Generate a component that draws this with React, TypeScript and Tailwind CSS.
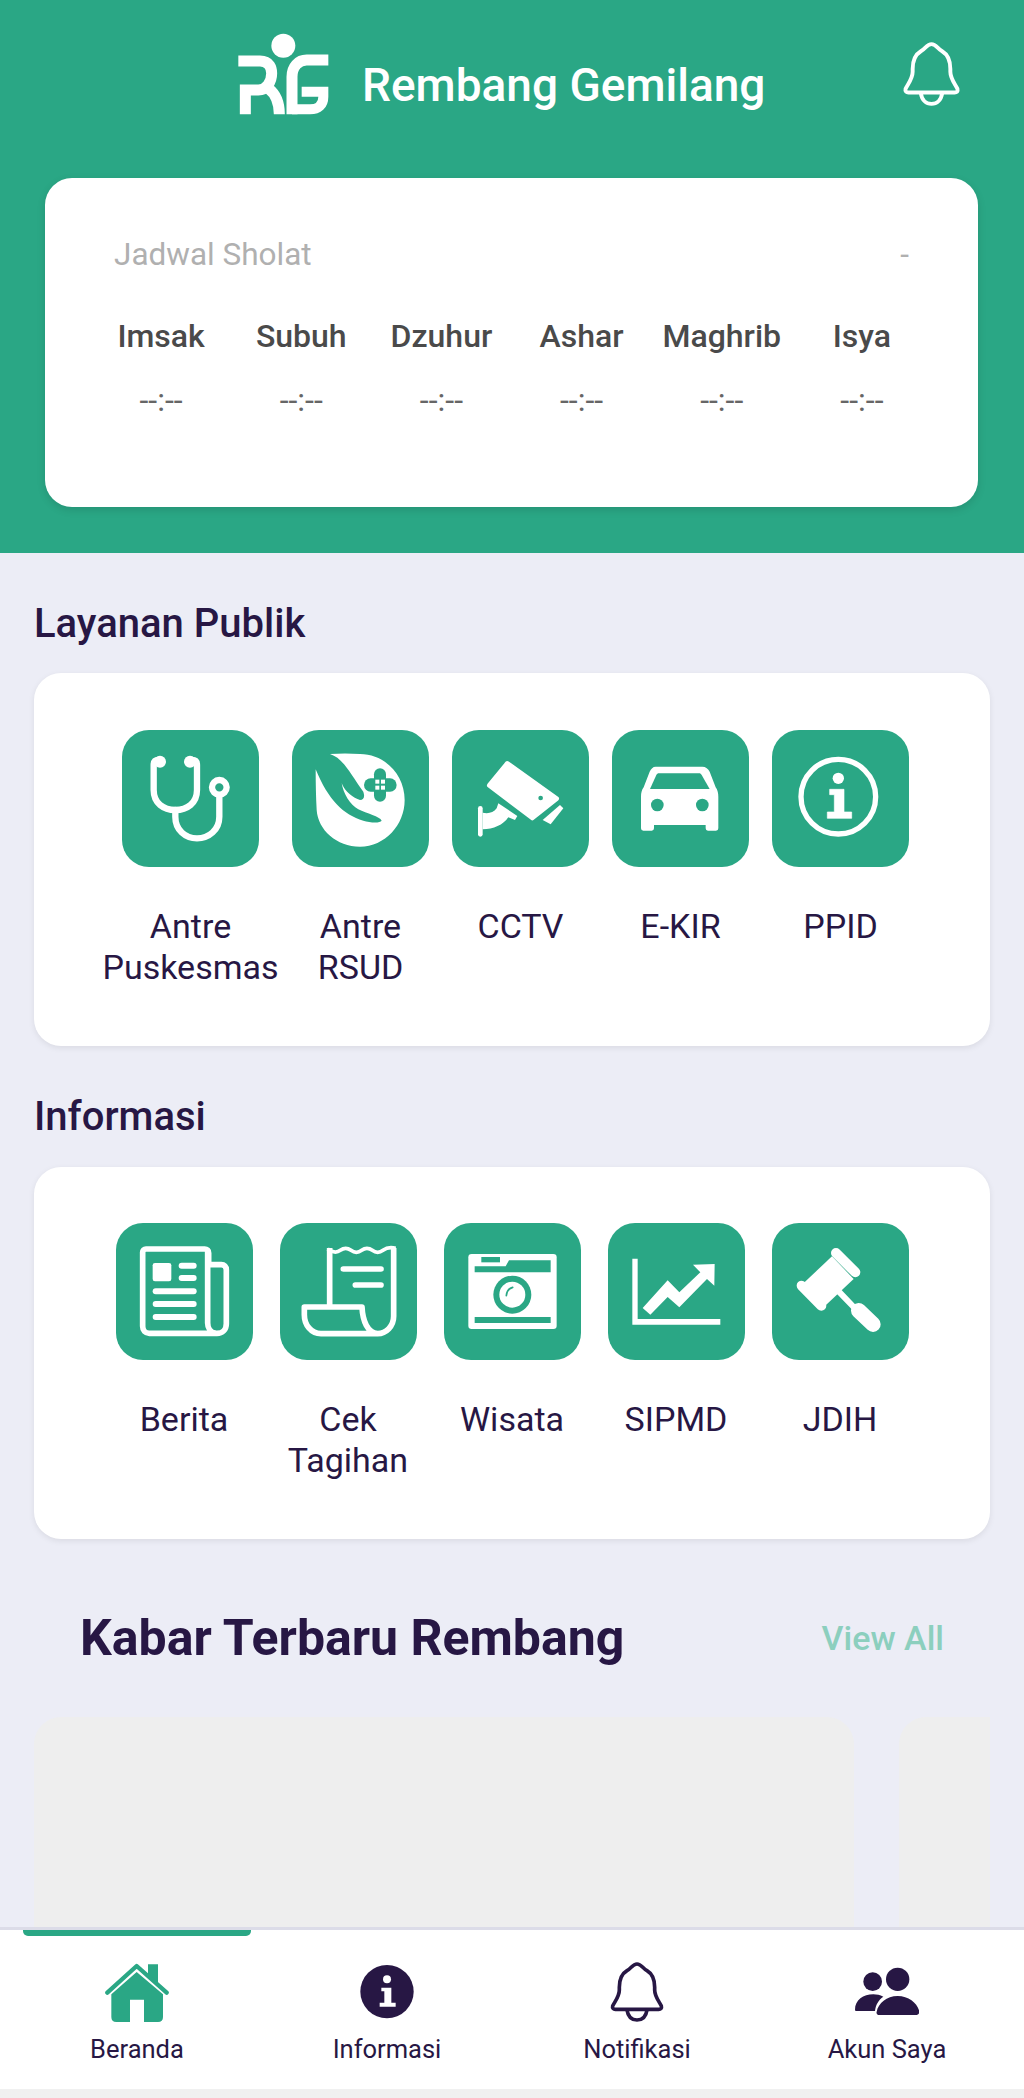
import type { ReactNode } from 'react';

const GREEN = '#2aa785';
const DARK = '#271744';

// z-coords are 3x pixels of the tile, each icon shifts them back to the 136 box
function Tile({ dx, dy, children }: { dx: number; dy: number; children: ReactNode }) {
  return (
    <div className="h-[137px] w-[137px] shrink-0 rounded-[27px] bg-[#2aa785]">
      <svg width="137" height="137" viewBox="0 0 137 137">
        <g transform={`scale(0.3333) translate(${-dx} ${-dy})`}>{children}</g>
      </svg>
    </div>
  );
}

const ICONS = {
  stethoscope: (
    <Tile dx={70} dy={60}>
      <g fill="none" stroke="#fff" strokeWidth="19" strokeLinecap="round">
        <path d="M180 150 C170 150 165 155 165 165 V240 C165 280 195 300 230 300 C265 300 295 280 295 240 V165 C295 155 290 150 280 150" />
        <path d="M230 300 V320 C230 360 260 385 295 385 C330 385 362 360 362 320 V262" />
        <circle cx="362" cy="232" r="22" />
      </g>
      <circle cx="184" cy="155" r="18" fill="#fff" />
      <circle cx="274" cy="155" r="18" fill="#fff" />
    </Tile>
  ),
  hand: (
    <Tile dx={-24} dy={-60}>
      <path
        fill="#fff"
        d="M47 58 C47 100 48 140 50 180 C54 240 110 290 180 290 C255 290 314 225 314 150 C314 75 255 12 180 12 C150 10 120 10 90 12 C130 25 150 70 190 125 C195 140 192 150 180 150 C160 145 135 125 125 100 C130 130 150 165 175 178 C200 190 240 200 245 212 C240 220 210 218 190 212 C130 195 85 150 47 58 Z"
      />
      <rect x="222" y="55" width="36" height="100" rx="18" fill={GREEN} />
      <rect x="192" y="85" width="98" height="40" rx="20" fill={GREEN} />
      <g fill="#fff">
        <rect x="226" y="89" width="12" height="12" />
        <rect x="243" y="89" width="12" height="12" />
        <rect x="226" y="107" width="12" height="12" />
        <rect x="243" y="107" width="12" height="12" />
      </g>
    </Tile>
  ),
  cctv: (
    <Tile dx={36} dy={60}>
      <path fill="#fff" stroke="#fff" strokeWidth="14" strokeLinejoin="round" d="M202 160 L350 266 L277 324 L148 226 Z" />
      <circle cx="302" cy="264" r="7" fill={GREEN} />
      <path fill="#fff" d="M360 285 L370 295 L332 343 L308 330 Z" />
      <rect x="114" y="288" width="14" height="92" rx="7" fill="#fff" />
      <path fill="#fff" d="M128 308 C145 312 160 308 170 295 L175 280 L232 318 L225 330 L205 322 C190 345 160 358 128 358 Z" />
    </Tile>
  ),
  car: (
    <Tile dx={519} dy={60}>
      <path
        fill="#fff"
        d="M650 170 H790 C800 170 808 176 812 185 L830 232 C836 240 838 250 838 260 V355 a7 7 0 0 1 -7 7 H807 a7 7 0 0 1 -7 -7 V345 H645 V355 a7 7 0 0 1 -7 7 H613 a7 7 0 0 1 -7 -7 V260 C606 250 608 240 614 232 L632 185 C636 176 642 170 650 170 Z"
      />
      <path fill={GREEN} d="M660 190 H780 C784 190 786 192 788 195 L812 237 H633 L652 195 C654 192 656 190 660 190 Z" />
      <circle cx="655" cy="285" r="19" fill={GREEN} />
      <circle cx="790" cy="285" r="19" fill={GREEN} />
    </Tile>
  ),
  info: (
    <Tile dx={999} dy={60}>
      <circle cx="1198" cy="260" r="112" fill="none" stroke="#fff" strokeWidth="16" />
      <circle cx="1198" cy="205" r="17" fill="#fff" />
      <path fill="#fff" d="M1172 238 H1215 V306 H1238 V325 H1165 V306 H1186 V254 H1172 Z" stroke="#fff" strokeWidth="2" strokeLinejoin="round" />
    </Tile>
  ),
  news: (
    <Tile dx={47} dy={40}>
      <g fill="none" stroke="#fff" strokeWidth="17" strokeLinejoin="round">
        <path d="M127 128 V350 C127 362 135 371 147 371 H350 C366 371 378 360 378 342 V180 C378 171 372 165 363 165 H325 V130 C325 123 320 118 313 118 H137 C131 118 127 122 127 128 Z" />
        <path d="M322 120 V340 C322 355 330 368 345 371" />
      </g>
      <rect x="157" y="160" width="56" height="55" rx="7" fill="#fff" />
      <g stroke="#fff" strokeLinecap="round" strokeWidth="18">
        <path d="M244 168 H280" />
        <path d="M244 205 H280" />
        <path d="M166 245 H280" />
        <path d="M166 283 H280" />
        <path d="M166 322 H280" />
      </g>
    </Tile>
  ),
  bill: (
    <Tile dx={537} dy={40}>
      <g fill="none" stroke="#fff" strokeWidth="17" strokeLinejoin="round">
        <path d="M686 115 V292" />
        <path d="M878 115 V320 C878 350 855 372 830 372 H660 C630 372 610 345 610 315 V292 H783 C785 335 800 370 830 372" />
      </g>
      <path fill="none" stroke="#fff" strokeWidth="11" d="M680 118 Q702 134 718 122 T750 122 T782 122 T814 122 T846 122 T884 116" />
      <g stroke="#fff" strokeLinecap="round" strokeWidth="17">
        <path d="M727 178 H840" />
        <path d="M763 226 H840" />
      </g>
    </Tile>
  ),
  camera: (
    <Tile dx={40} dy={40}>
      <rect x="113" y="133" width="265" height="225" rx="10" fill="#fff" />
      <path fill={GREEN} d="M132 170 H225 L235 152 H360 V188 H132 Z" />
      <rect x="152" y="142" width="56" height="16" fill={GREEN} />
      <rect x="132" y="322" width="228" height="18" fill={GREEN} />
      <circle cx="245" cy="255" r="57" fill={GREEN} />
      <circle cx="245" cy="255" r="39" fill="#fff" />
      <path d="M227 258 C228 245 235 236 246 233" fill="none" stroke={GREEN} strokeWidth="5" strokeLinecap="round" />
    </Tile>
  ),
  chart: (
    <Tile dx={533} dy={40}>
      <path fill="#fff" d="M606 147 H622 V328 H870 V345 H606 Z" />
      <path fill="#fff" d="M637 295 L712 212 L747 248 L810 188 L788 165 L853 163 L852 228 L830 208 L747 293 L712 262 L660 315 Z" />
    </Tile>
  ),
  gavel: (
    <Tile dx={1025} dy={40}>
      <g stroke="#fff" strokeLinecap="round" fill="none">
        <path d="M1217 130 L1275 188" strokeWidth="30" />
        <path d="M1114 228 L1173 288" strokeWidth="30" />
        <path d="M1225 245 L1270 292" strokeWidth="18" />
        <path d="M1285 303 L1328 344" strokeWidth="46" />
      </g>
      <path fill="#fff" d="M1205 140 L1270 208 L1183 290 L1120 220 Z" />
    </Tile>
  ),
};

function Bell({ color, width, height }: { color: string; width: number; height: number }) {
  return (
    <svg width={width} height={height} viewBox="279 186 192 180" fill="none" stroke={color} strokeWidth="11" strokeLinejoin="round">
      <path d="M375 192 C362 192 358 205 345 212 C328 222 322 240 322 262 V270 C322 290 308 305 302 318 C300 325 305 328 310 328 H440 C446 328 450 325 448 318 C442 305 428 290 428 270 V262 C428 240 422 222 405 212 C392 205 388 192 375 192 Z" />
      <path d="M345 330 C348 350 360 360 375 360 C390 360 402 350 405 330" />
    </svg>
  );
}

function Logo() {
  return (
    <svg width="110" height="100" viewBox="0 0 330 300" className="shrink-0" fill="none" stroke="#fff" strokeWidth="33">
      <circle cx="160" cy="62" r="36" fill="#fff" stroke="none" />
      <path d="M25 108 H90 C120 108 125 130 125 145 C125 170 110 195 85 195 H46 V268" />
      <path d="M115 190 C135 205 148 230 148 268" />
      <path d="M295 105 H230 C205 105 186 125 186 155 V268" />
      <path d="M186 253 H240 C265 253 280 240 280 215 V200 H215" strokeWidth="30" />
    </svg>
  );
}

const PRAYERS = ['Imsak', 'Subuh', 'Dzuhur', 'Ashar', 'Maghrib', 'Isya'];

const NAV = [
  {
    label: 'Beranda',
    active: true,
    icon: (
      <svg width="64" height="60" viewBox="313 185 192 180">
        <path fill={GREEN} d="M442 192 H472 V250 L442 224 Z" />
        <path d="M320 277 L408 197 L498 277" fill="none" stroke={GREEN} strokeWidth="13" strokeLinecap="round" strokeLinejoin="round" />
        <path fill={GREEN} d="M332 282 L408 215 L487 282 V350 C487 360 482 365 472 365 H430 V298 H388 V365 H347 C337 365 332 360 332 350 Z" />
      </svg>
    ),
  },
  {
    label: 'Informasi',
    icon: (
      <svg width="64" height="60" viewBox="1064 186 192 180">
        <circle cx="1160" cy="275" r="80" fill={DARK} />
        <circle cx="1160" cy="238" r="12" fill="#fff" />
        <path fill="#fff" d="M1143 263 H1173 V308 H1186 V320 H1138 V308 H1152 V274 H1143 Z" />
      </svg>
    ),
  },
  { label: 'Notifikasi', icon: <Bell color={DARK} width={64} height={60} /> },
  {
    label: 'Akun Saya',
    icon: (
      <svg width="64" height="60" viewBox="1030 186 192 180" fill={DARK}>
        <circle cx="1083" cy="245" r="28" />
        <circle cx="1158" cy="238" r="35" />
        <path d="M1030 330 C1030 300 1055 283 1085 283 C1095 283 1105 285 1115 290 C1100 300 1092 315 1090 333 H1035 C1032 333 1030 332 1030 330 Z" />
        <path d="M1095 335 C1100 310 1125 288 1158 288 C1192 288 1218 310 1223 335 C1223 342 1218 345 1215 345 H1103 C1098 345 1093 342 1095 335 Z" />
      </svg>
    ),
  },
];

function MenuItem({ icon, lines, className }: { icon: ReactNode; lines: string[]; className: string }) {
  return (
    <div className={`flex shrink-0 flex-col items-center ${className}`}>
      {icon}
      <div className="mt-[39px] text-center text-[34px] leading-[41px] whitespace-nowrap text-[#271744]">
        {lines.map((line) => (
          <div key={line}>{line}</div>
        ))}
      </div>
    </div>
  );
}

export default function App() {
  return (
    <div className="flex h-[2098px] w-[1024px] flex-col overflow-hidden bg-[#ecedf6] font-['Roboto',sans-serif]">
      <main className="min-h-0 flex-1 overflow-hidden">
        {/* Green header with prayer times */}
        <header className="h-[553px] bg-[#2aa785] px-[45px] pt-[25px]">
          <div className="flex h-[100px] items-center pr-[13px] pl-[185px]">
            <Logo />
            <h1 className="mt-[21px] ml-[22px] text-[46px] font-medium text-white">Rembang Gemilang</h1>
            <div className="mt-[-2px] ml-auto">
              <Bell color="#fff" width={69} height={64} />
            </div>
          </div>
          <div className="mt-[53px] h-[329px] w-[933px] rounded-[27px] bg-white px-[46px] pt-[58px] shadow-[0_3px_8px_rgba(0,0,0,0.12)]">
            <div className="flex items-center justify-between px-[23px] text-[31.5px] leading-[38px] text-[#b0b0b0]">
              <span>Jadwal Sholat</span>
              <span>-</span>
            </div>
            <div className="mt-[42px] grid grid-cols-6 text-center text-[#4a4a4a]">
              {PRAYERS.map((name) => (
                <div key={name}>
                  <div className="text-[32px] leading-[40px] font-medium">{name}</div>
                  <div className="mt-[24px] text-[32px] leading-[40px] text-[#666]">--:--</div>
                </div>
              ))}
            </div>
          </div>
        </header>

        {/* Layanan Publik */}
        <section className="mx-[34px]">
          <h2 className="pt-[49px] text-[40px] leading-[44px] font-medium text-[#271744]">Layanan Publik</h2>
          <div className="mt-[27px] flex h-[373px] justify-center gap-[23px] rounded-[27px] bg-white pt-[57px] pr-[3px] shadow-[0_2px_6px_rgba(0,0,0,0.08)]">
            <MenuItem className="w-[157px]" icon={ICONS.stethoscope} lines={['Antre', 'Puskesmas']} />
            <MenuItem className="w-[137px]" icon={ICONS.hand} lines={['Antre', 'RSUD']} />
            <MenuItem className="w-[137px]" icon={ICONS.cctv} lines={['CCTV']} />
            <MenuItem className="w-[137px]" icon={ICONS.car} lines={['E-KIR']} />
            <MenuItem className="w-[137px]" icon={ICONS.info} lines={['PPID']} />
          </div>
        </section>

        {/* Informasi */}
        <section className="mx-[34px]">
          <h2 className="pt-[49px] text-[40px] leading-[44px] font-medium text-[#271744]">Informasi</h2>
          <div className="mt-[28px] flex h-[372px] justify-center gap-[27px] rounded-[27px] bg-white pt-[56px] shadow-[0_2px_6px_rgba(0,0,0,0.08)]">
            <MenuItem className="w-[137px]" icon={ICONS.news} lines={['Berita']} />
            <MenuItem className="w-[137px]" icon={ICONS.bill} lines={['Cek', 'Tagihan']} />
            <MenuItem className="w-[137px]" icon={ICONS.camera} lines={['Wisata']} />
            <MenuItem className="w-[137px]" icon={ICONS.chart} lines={['SIPMD']} />
            <MenuItem className="w-[137px]" icon={ICONS.gavel} lines={['JDIH']} />
          </div>
        </section>

        {/* News */}
        <section>
          <div className="mt-[69px] flex items-center justify-between pr-[80px] pl-[80px]">
            <h2 className="text-[50px] leading-[60px] font-bold text-[#271744]">Kabar Terbaru Rembang</h2>
            <span className="text-[34px] font-medium text-[#8ccfbe]">View All</span>
          </div>
          <div className="mx-[34px] mt-[49px] flex gap-[45px] overflow-hidden">
            <div className="h-[300px] w-[820px] shrink-0 rounded-t-[27px] bg-[#eeeeee]" />
            <div className="h-[300px] w-[820px] shrink-0 rounded-t-[27px] bg-[#eeeeee]" />
          </div>
        </section>
      </main>

      {/* Bottom navigation */}
      <nav className="shrink-0 border-t-[3px] border-[#dcdce8] bg-[#f0f0f0] pb-[9px]">
        <div className="grid h-[159px] grid-cols-4 bg-white px-[12px]">
          {NAV.map((item) => (
            <div key={item.label} className="relative flex flex-col items-center pt-[32px]">
              {item.active && <div className="absolute top-0 right-[11px] left-[11px] h-[6px] rounded-b-[5px] bg-[#2aa785]" />}
              {item.icon}
              <span className="mt-[9px] text-[25.5px] leading-[36px] text-[#271744]">{item.label}</span>
            </div>
          ))}
        </div>
      </nav>
    </div>
  );
}
